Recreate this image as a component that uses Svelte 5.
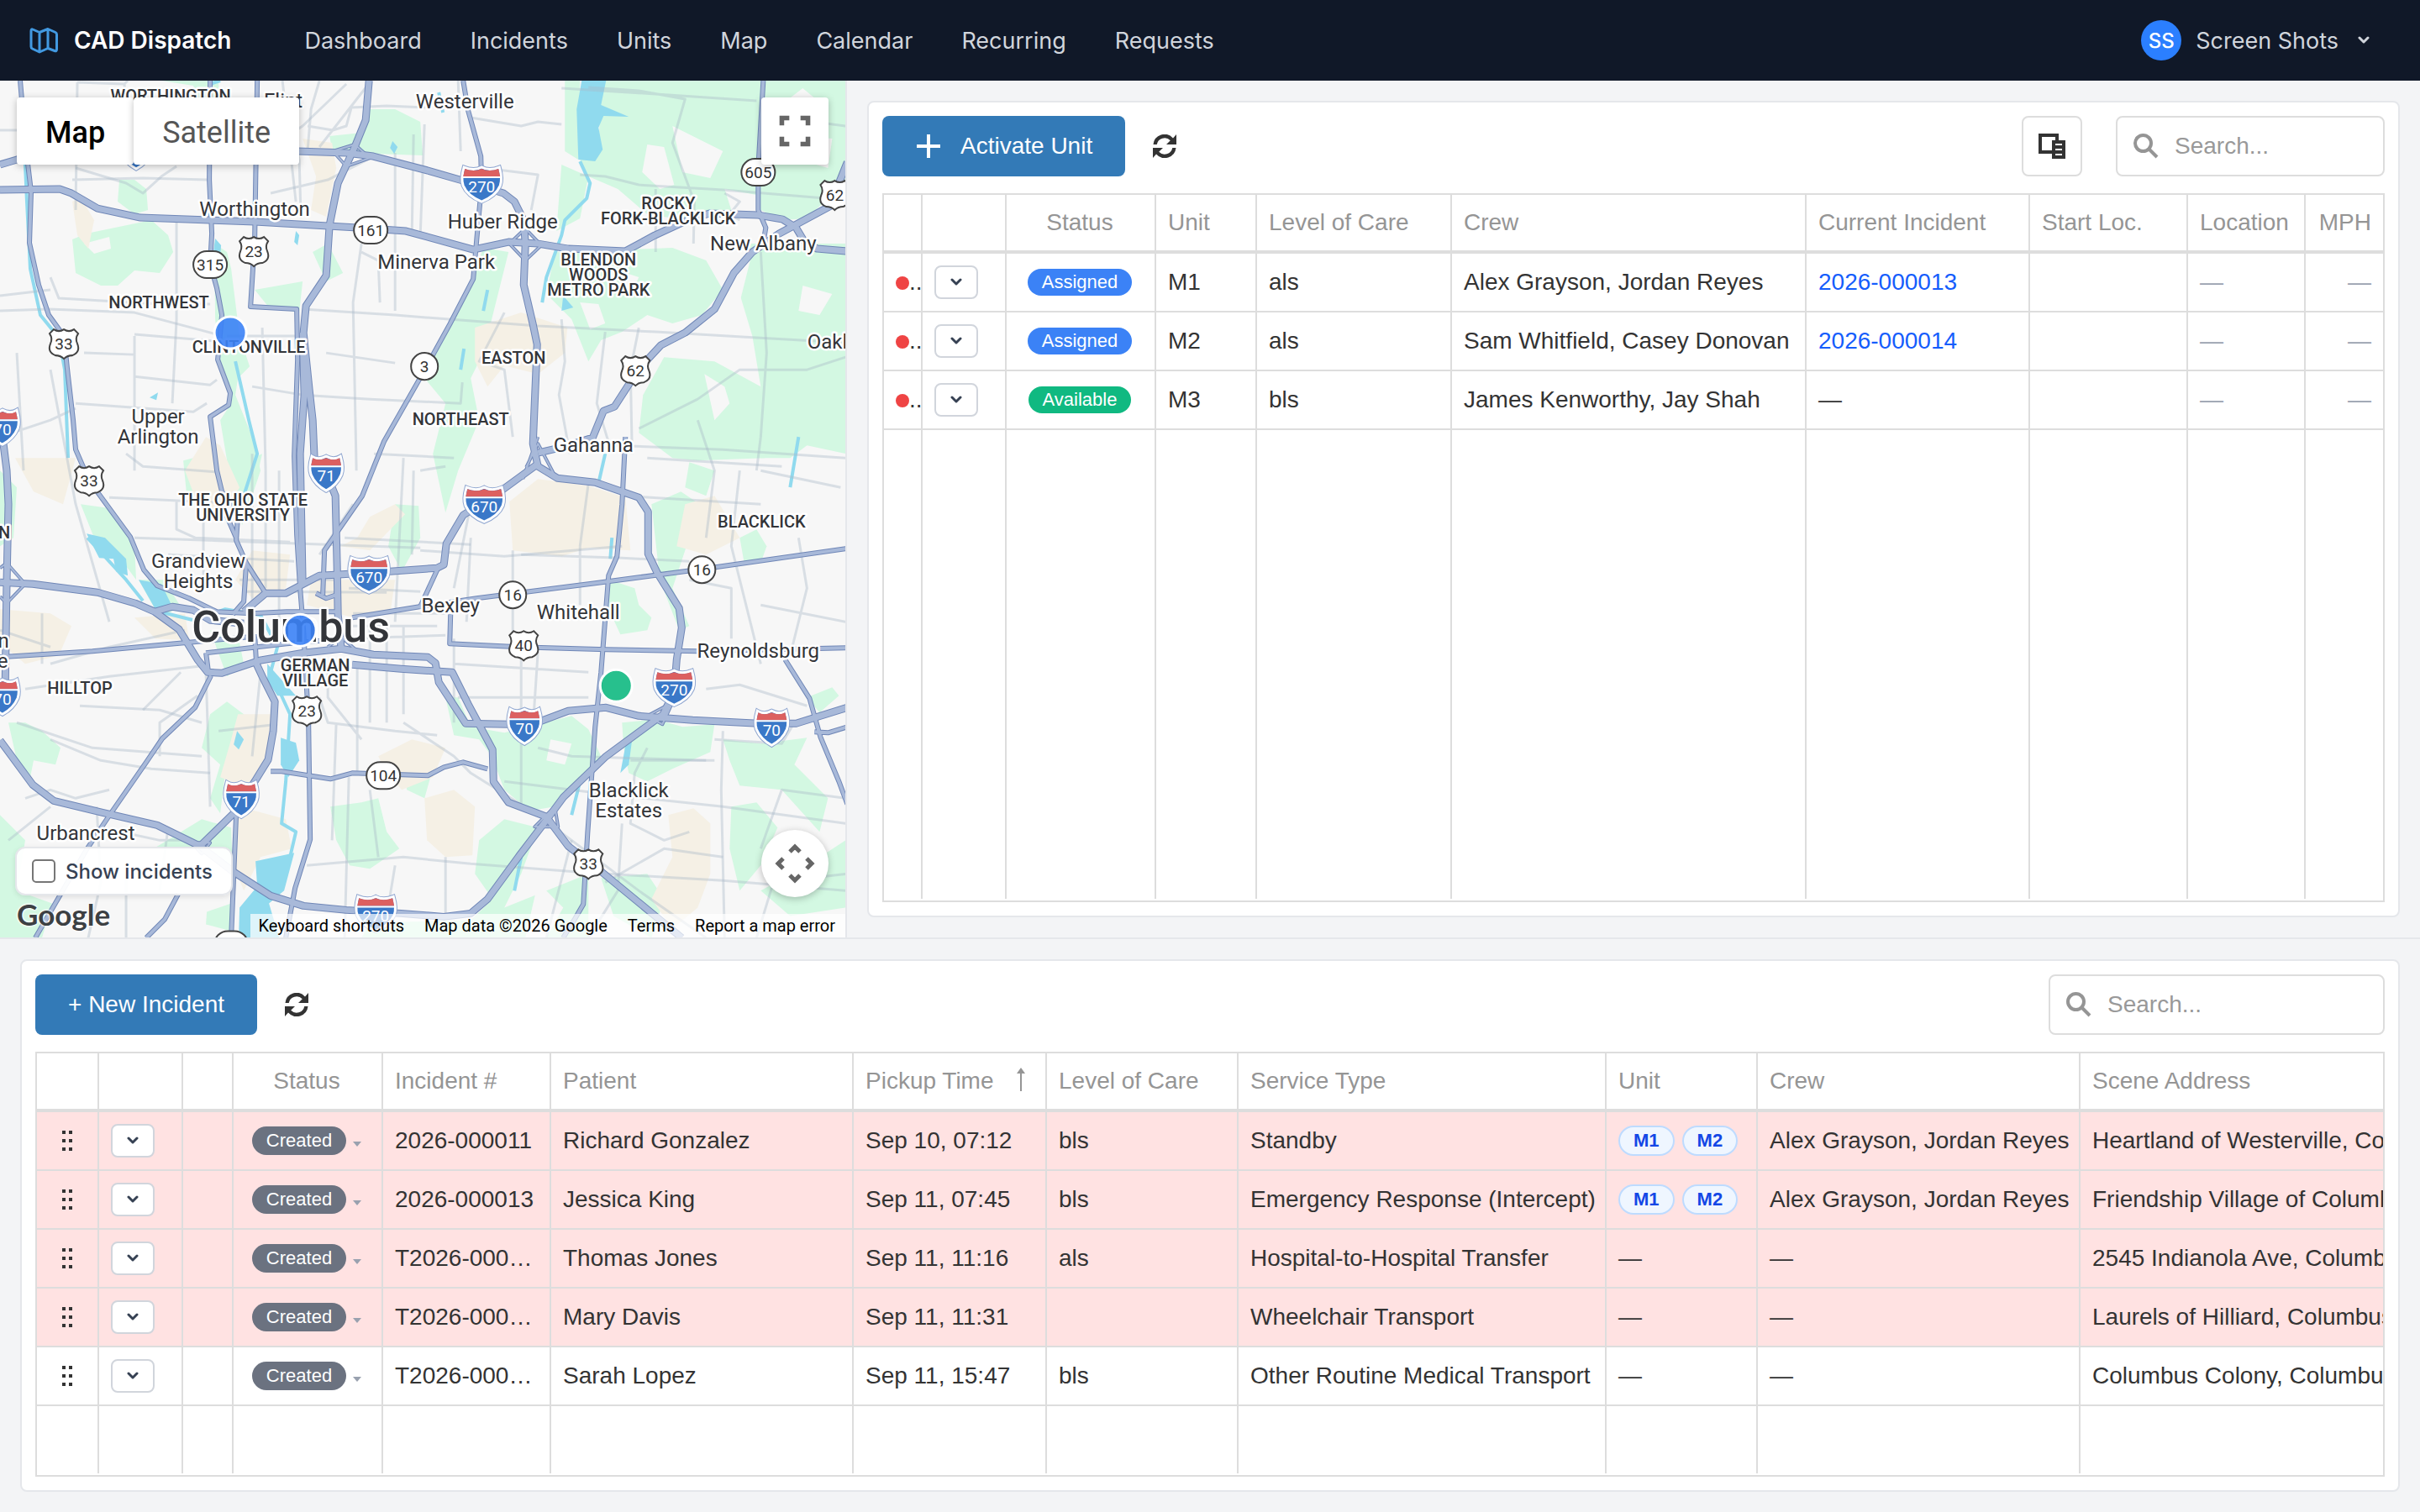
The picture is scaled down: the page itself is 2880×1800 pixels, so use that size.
<script>
  const navLinks = ['Dashboard', 'Incidents', 'Units', 'Map', 'Calendar', 'Recurring', 'Requests'];

  let unitSearch = $state('');
  let incidentSearch = $state('');
  let showIncidents = $state(false);
  let mapType = $state('Map');

  const units = [
    { name: 'M1', status: 'Assigned', care: 'als', crew: 'Alex Grayson, Jordan Reyes', incident: '2026-000013' },
    { name: 'M2', status: 'Assigned', care: 'als', crew: 'Sam Whitfield, Casey Donovan', incident: '2026-000014' },
    { name: 'M3', status: 'Available', care: 'bls', crew: 'James Kenworthy, Jay Shah', incident: null },
  ];

  const incidents = [
    { number: '2026-000011', patient: 'Richard Gonzalez', pickup: 'Sep 10, 07:12', care: 'bls', service: 'Standby', units: ['M1', 'M2'], crew: 'Alex Grayson, Jordan Reyes', address: 'Heartland of Westerville, Columbus', late: true },
    { number: '2026-000013', patient: 'Jessica King', pickup: 'Sep 11, 07:45', care: 'bls', service: 'Emergency Response (Intercept)', units: ['M1', 'M2'], crew: 'Alex Grayson, Jordan Reyes', address: 'Friendship Village of Columbus', late: true },
    { number: 'T2026-000021', patient: 'Thomas Jones', pickup: 'Sep 11, 11:16', care: 'als', service: 'Hospital-to-Hospital Transfer', units: [], crew: '—', address: '2545 Indianola Ave, Columbus', late: true },
    { number: 'T2026-000022', patient: 'Mary Davis', pickup: 'Sep 11, 11:31', care: '', service: 'Wheelchair Transport', units: [], crew: '—', address: 'Laurels of Hilliard, Columbus', late: true },
    { number: 'T2026-000023', patient: 'Sarah Lopez', pickup: 'Sep 11, 15:47', care: 'bls', service: 'Other Routine Medical Transport', units: [], crew: '—', address: 'Columbus Colony, Columbus', late: false },
  ];

  // Map geometry, all in the same coordinate space as the svg viewBox
  const parks = [
    'M716 96H1006V215L960 260 930 262 905 250 850 250 815 262 770 255 735 225 700 210 690 190 712 170Z',
    'M890 290H1006V540L960 530 940 545 905 545 905 460 895 400 880 350Z',
    'M790 425L850 430 905 460 910 545 830 548 800 545 760 515 765 470Z',
    'M660 300L800 295 840 310 860 345 835 375 800 385 770 375 740 395 715 405 700 430 680 380 650 350Z',
    'M575 295L605 300 590 360 575 420 560 450 570 500 545 560 530 610 515 540 530 480 505 450 530 390 555 350Z',
    'M103 278L180 262 200 280 206 300 190 325 160 322 140 340 120 340 90 325 86 285Z',
    'M142 214L160 214 174 225 176 250 160 255 140 240Z',
    'M440 130L470 130 500 145 503 185 444 183 395 178 392 162 430 158Z',
    'M192 96H260L262 150 245 150 230 102Z',
    'M255 290L270 300 275 320 280 360 285 400 297 436 283 450 280 470 300 520 310 560 290 620 283 600 272 560 262 500 275 480 262 430 256 380Z',
    'M372 300L390 290 408 325 388 335Z',
    'M303 345L360 335 356 372 320 366Z',
    'M672 96L690 96 688 190 672 180Z',
    'M668 196L700 210 690 260 662 275Z',
    'M218 548L242 542 244 590 222 588Z',
    'M300 545L312 540 300 590 288 625 282 600Z',
    'M96 600L132 605 160 650 162 690 140 660 112 640Z',
    'M165 690L195 690 215 722 190 735Z',
    'M470 600L498 602 500 640 478 680 462 650Z',
    'M0 560L20 580 16 640 0 650Z',
    'M10 860L30 860 50 870 72 890 66 910 40 905 34 935 20 905Z',
    'M250 750L285 765 290 790 270 805Z',
    'M250 850L270 835 290 850 284 880 268 920 262 968 250 950 262 910 240 890Z',
    'M393 960L430 955 450 950 460 990 475 1010 440 1034 416 1030 400 1000Z',
    'M478 902L520 905 512 925 505 950 484 940Z',
    'M530 830L545 830 560 865 600 872 680 852 700 868 715 900 690 930 660 960 630 965 600 940 585 900 570 880 540 875Z',
    'M740 860L780 856 812 865 850 862 845 895 800 915 770 930 748 920 742 890Z',
    'M860 880L905 885 960 878 945 910 985 950 975 990 930 940 880 935 868 905Z',
    'M600 975L640 985 620 1040 600 1080 700 1040 700 1116 430 1116 440 1098 560 1095 586 1070 565 1040 570 1000Z',
    'M715 1045L770 1040 790 1070 775 1116 730 1090Z',
    'M905 1060L960 1030 1006 1000 1006 1080 940 1090Z',
    'M870 960L900 955 925 985 905 1030 880 1060 868 1010Z',
    'M725 690L755 700 760 720 775 735 770 750 738 755 722 720Z',
    'M775 600L810 585 840 605 820 640 800 700 820 745 808 750 785 690Z',
    'M880 640L900 630 912 650 905 670 885 668Z',
    'M960 830L990 818 998 828 975 848Z',
    'M820 550L850 560 840 590 815 580Z',
    'M0 970L30 1000 20 1060 62 1075 50 1116 0 1116Z',
    'M186 1008L240 975 275 985 277 1040 240 1010Z',
    'M246 1085L275 1075 275 1108 245 1100Z',
  ];

  const clearings = [
    'M770 172L790 175 802 220 785 225 764 205Z',
    'M800 150L860 180 845 212 812 205Z',
    'M862 225L900 232 905 262 870 250Z',
    'M870 300L895 300 880 360 862 372Z',
    'M925 128L955 105 985 130 960 150Z',
    'M930 160L990 165 985 200 950 190Z',
    'M838 445L862 460 868 480 850 500Z',
    'M955 340L990 350 975 375 950 370Z',
    'M735 322L760 330 750 352 738 345Z',
    'M690 360L712 362 720 385 702 392Z',
    'M640 1050L670 1080 650 1116 625 1116Z',
    'M655 880L680 885 672 910 650 905Z',
    'M100 290L130 282 132 296 112 302Z',
  ];

  const districts = [
    'M606 597L640 570 700 578 744 592 750 655 700 652 668 662 610 655Z',
    'M565 390L620 372 675 390 672 420 640 445 600 435 580 460 565 430Z',
    'M0 725L60 730 85 745 70 780 30 790 0 765Z',
    'M505 950L540 940 565 960 562 1018 530 1020 508 1000Z',
    'M795 970L825 962 845 980 845 1040 830 1080 800 1105 775 1070 800 1020Z',
    'M283 850L325 850 318 900 300 940 262 925 275 880Z',
    'M285 960L340 975 347 1010 310 1020 290 1060 278 1030Z',
    'M360 165L395 170 400 200 388 258 370 250 376 210Z',
    'M86 240L96 235 112 262 105 296 92 280Z',
    'M245 520L262 530 285 580 262 620 235 600 220 560Z',
    'M300 655L345 660 340 700 300 712 280 690Z',
    'M405 650L440 655 482 612 470 600 440 615 425 640Z',
    'M370 690L470 690 465 725 420 735 365 720Z',
    'M18 545L90 545 75 600 40 585Z',
    'M815 600L850 590 880 640 840 660 805 650Z',
    'M450 900L490 880 530 890 515 925 478 940 460 920Z',
    'M160 735L220 730 225 762 185 760Z',
  ];

  const water = [
    'M692 96H721L715 125 748 139 718 138 712 152 717 178 708 192 688 190 686 130Z',
    'M103 635L125 640 150 665 152 685 138 680 135 665 118 664Z',
    'M165 690L192 695 205 722 186 727Z',
    'M318 790L352 828 330 828 318 810Z',
    'M334 878L352 884 356 905 343 925 334 910Z',
    'M282 870L290 880 284 892 278 886Z',
    'M304 1025L350 1015 338 1060 320 1075 332 1116 284 1116 285 1080 306 1055Z',
    'M467 168L473 175 469 183 464 176Z',
    'M256 284L263 292 262 305 254 300Z',
    'M670 352L682 366 668 370Z',
    'M178 473L188 467 186 476Z',
    'M352 275L356 280 354 292 350 288Z',
    'M744 888L752 880 748 910 738 920Z',
  ];

  const streams = [
    'M26 110L32 240 36 320 48 375 70 402 77 440 81 545',
    'M690 192L702 218 698 236 672 262 668 280 650 330 645 360',
    'M522 110L527 134',
    'M250 100L262 96M280 430L296 500 306 540 290 590',
    'M186 727L230 738 268 725 310 732 330 770 322 800 345 850 340 930 335 980 352 990 345 1020',
    'M580 345L575 370M552 415L548 440',
    'M104 640L150 690 170 715',
    'M620 1020L612 1060M690 930L680 970',
    'M728 640L726 665M950 520L940 580',
    'M720 540L712 575',
  ];

  const streets = [
    'M92 98L90 250M92 98L148 100 152 96M148 100L150 140M86 214L170 212 246 214M0 155L24 155 40 190',
    'M90 200L150 218 170 230 192 210 210 198',
    'M336 96L352 240M380 96L370 130 366 178M366 150L396 155 412 150 418 128 460 126 506 128M440 98L380 175',
    'M300 190L360 150 412 100M322 230L390 214 445 186M345 140L356 190 358 260',
    'M60 330L70 355 190 362 250 362M0 352L60 345M0 370L58 368 160 372 258 398',
    'M160 400V560M160 398L258 406M100 420L160 422M160 448L250 458 258 452',
    'M210 260V380L205 480M270 400L360 400M312 390L316 560M300 460L360 470 440 475 548 480 550 455',
    'M360 368L470 375 640 388 780 395 900 402 1006 408',
    'M470 182V370M492 160L490 280M430 290L420 360 424 560M388 420L470 432M430 300L450 310 452 360',
    'M545 96L548 180M505 148L500 280M560 140L620 150 640 145 668 148M576 200L640 208 632 250',
    'M668 105L780 112 900 120M700 104L760 108 815 118 800 170 826 240 825 290M690 208L720 210 760 220 860 226 1006 238',
    'M862 230L880 240 868 255 880 262M780 225V300M1006 150L930 140',
    'M600 372L570 430 600 440 610 520M668 380L672 430 665 470 678 540M760 390L750 440 752 540',
    'M500 560L530 555M445 540L540 545M760 510L830 475 880 440 960 440 1006 425M905 300L912 420 905 520 900 560',
    'M720 395L710 480 725 530 860 535 1006 545M770 545L930 555M740 590L905 600M1000 580L905 560',
    'M90 480L230 490 246 480M0 520L60 500 90 486M20 420L28 560M60 440L90 600 130 740',
    'M150 540L170 555 260 562M130 592L300 600M210 595V630L232 640 345 645M160 640L500 652M200 660L350 668',
    'M300 540V720M316 560V700M332 560V740M242 600V700M480 545L470 740M492 560L490 660M500 655L600 662 740 650',
    'M285 690L400 690M290 704L460 705M420 600L380 660M410 640L560 648M415 700L500 704',
    'M420 730H530M420 745H520M410 760L530 756M440 745V860M460 745V860M480 745V850M425 790V920M390 800V830L430 880',
    'M560 600L540 700M610 655V760M690 650V720M700 575L690 650M620 660L740 664 820 668',
    'M60 790L130 770 220 750M30 820L130 805 245 792M95 840L190 845 240 860M50 730V790M0 750L60 770M60 880L120 905 180 915 250 920',
    'M245 800L250 960M260 870L330 862M170 845L215 800M190 900L190 860 235 828M20 860L110 890 240 900',
    'M310 800L300 900M380 830L390 860 470 870 520 875M400 860L395 1000M415 925L410 1116M480 860L540 900 560 920 640 970 760 1060 840 1116',
    'M365 1030L480 1020 560 1028 690 1038 860 1048 1006 1060M600 930L720 945 860 960 1006 980M640 890L680 900 840 905',
    'M540 790L700 800M540 760V860M620 775V960M560 640L555 740M640 775L635 850M545 830L700 830',
    'M830 500L850 560 840 640M820 690L870 700 870 760M880 560L870 650 905 790M840 820L880 815 960 840M905 720L1006 740M950 640L960 700 940 780',
    'M860 870L858 940 862 1116M770 890L755 920 750 980 790 1000 820 990M850 880L930 885 945 860M750 905L850 905',
    'M905 1010L930 940 1006 950M720 1050L790 1010 860 1020M900 1116L920 1050 1006 1040M30 950L60 940 90 950 130 940M10 1000L60 960',
    'M120 985L190 1000 230 1000M115 960L120 1050 105 1116M150 1040V1116M200 985L190 1060',
    'M470 1030L460 1090M530 1020V1090M440 940L450 1020M680 1000L650 1116M740 980L735 1060 700 1116',
  ];

  const highways = [
    'M24 96L31 178 37 228 35 289 46 339 58 375 76 400 80 439 87 500 90 535 106 572 155 639 171 678 187 697 225 712 258 728 300 730 341 728 400 728',
    'M250 96L249 214 252 278 250 314 258 343 264 375 259 428 274 468 272 482 250 496 258 560 264 585 283 612 281 643 293 670 290 716 277 731',
    'M306 96L303 286 298 365 353 368 354 428 350 543 353 636 357 700 361 750 367 858 369 999 351 1057 340 1116',
    'M551 96L557 132 572 186 573 219 567 286 563 332 535 386 502 446 457 525 431 590 386 655 384 708',
    'M908 96L902 200 902 250 911 271 908 289',
    'M499 724L522 674M536 731L535 766 618 770 721 773 831 775 1006 771',
    'M0 782L110 775 219 765 296 758M419 735L499 722 567 712 708 694 837 677 1006 653',
    'M744 520L740 600 734 662 724 685 715 800 708 865 699 992 694 1076 683 1095 670 1116',
    'M322 918L335 918 393 927 419 920 509 923 528 913 551 907 580 915',
    'M251 804L232 842 193 879 174 907 129 972 103 1011 42 1116',
    'M281 969L275 1116M212 1064L196 1094 174 1116M245 777L341 766 410 760M245 777L248 800M303 755L305 790',
    'M934 785L963 831 976 877 998 930 1008 957M969 871L985 872 1008 865',
    'M376 706L388 712 400 708 402 694M293 670L316 706M268 610L281 640',
  ];

  const interstates = [
    'M0 196L20 190 90 178M354 180L412 182 444 186 509 203 554 216 599 230 612 240 623 262 625 290 623 339 634 386 639 410 634 528 640 555 663 569 708 574 760 592 771 609 771 659 782 682 808 724 811 747 805 785 802 823 789 850 721 900 670 949 650 976 618 1018 580 1070 560 1087 528 1091 477 1087 412 1083 361 1078 322 1066 277 1037 238 1007 187 982 122 967 64 953 39 934 0 881',
    'M439 96L435 143 422 175 402 218 392 268 388 328 364 364 361 396 368 464 372 500 374 546 388 563 399 590 401 674 402 731 406 772M360 396L362 470 357 540 360 693',
    'M0 226L71 225 85 230 116 248 167 259 303 264 425 271 483 275 563 297 605 288 640 290 676 296 744 299 779 280 818 262 844 254 902 256 931 261 947 271 956 286 972 296 1008 299',
    'M1008 193L998 218 992 243 927 278 895 300 873 325 850 368 815 396 786 411 760 439 731 484 718 489 705 521 670 532 640 539',
    'M640 552L599 582 576 597 551 613 531 647 528 672 520 676 464 680 399 684 380 685 357 697 340 706 316 706 290 728',
    'M0 693L39 695 116 705 161 718 184 728 213 749 235 785 247 800 264 801 309 786 361 777 406 772 444 779 509 782 518 789 522 812 554 861 605 862 644 858 676 846 721 842 760 852 824 857 902 861 947 861 1008 842',
    'M184 728L205 722 230 726 250 738 290 742M419 791L477 796 538 800 557 838 586 892 587 930 605 955 650 972 676 1007 715 1037 811 1116',
    'M305 790L312 805 327 835 325 870 319 904 303 930 277 969 238 1007M3 520L8 560 10 600 8 693 6 830',
  ];

  const ramps = [
    'M396 180L422 172 440 188 412 198ZM420 175L410 200',
    'M606 290L625 272 644 292 625 310Z',
    'M626 556L640 528 660 566M640 520L622 570',
    'M8 670L30 695 8 718 0 710M0 676L8 670',
    'M770 852L800 836 788 862Z',
    'M636 984L660 960 664 984Z',
    'M228 1003L250 1003 240 1016Z',
    'M390 770L406 758 424 774',
  ];

  const townLabels = [
    [337, 128, 'Flint'], [553, 129, 'Westerville'], [303, 257, 'Worthington'], [598, 272, 'Huber Ridge'],
    [519, 320, 'Minerva Park'], [908, 298, 'New Albany'], [1004, 415, 'Oakland'], [188, 504, 'Upper'],
    [188, 528, 'Arlington'], [706, 538, 'Gahanna'], [236, 676, 'Grandview'], [236, 700, 'Heights'],
    [536, 729, 'Bexley'], [688, 737, 'Whitehall'], [902, 783, 'Reynoldsburg'], [748, 949, 'Blacklick'],
    [748, 973, 'Estates'], [102, 1000, 'Urbancrest'], [4, 771, 'n'], [3, 795, 'e'],
  ];

  const areaLabels = [
    [203, 121, 'WORTHINGTON'], [795, 249, 'ROCKY'], [795, 267, 'FORK-BLACKLICK'], [712, 316, 'BLENDON'],
    [712, 334, 'WOODS'], [712, 352, 'METRO PARK'], [189, 367, 'NORTHWEST'], [296, 420, 'CLINTONVILLE'],
    [611, 433, 'EASTON'], [548, 506, 'NORTHEAST'], [289, 602, 'THE OHIO STATE'], [289, 620, 'UNIVERSITY'],
    [906, 628, 'BLACKLICK'], [375, 799, 'GERMAN'], [375, 817, 'VILLAGE'], [95, 826, 'HILLTOP'], [5, 641, 'N'],
  ];

  const interstateShields = [
    [162, 180, '71'], [573, 219, '270'], [388, 563, '71'], [576, 600, '670'], [439, 684, '670'], [802, 818, '270'],
    [624, 864, '70'], [918, 866, '70'], [287, 951, '71'], [447, 1087, '270'], [3, 508, '70'], [3, 829, '70'],
  ];

  const stateShields = [
    [902, 205, '605'], [441, 274, '161'], [250, 315, '315'], [505, 436, '3'],
    [610, 708, '16'], [835, 678, '16'], [456, 923, '104'], [275, 1124, ''],
  ];

  const usShields = [
    [993, 232, '62'], [302, 299, '23'], [76, 409, '33'], [756, 441, '62'],
    [106, 572, '33'], [623, 768, '40'], [365, 846, '23'], [700, 1028, '33'],
  ];

  const unitMarkers = [
    { x: 274, y: 396, status: 'assigned' },
    { x: 357, y: 750, status: 'assigned' },
    { x: 733, y: 816, status: 'available' },
  ];
</script>

{#snippet chevron()}
  <svg class="chevron" viewBox="0 0 14 10" aria-hidden="true"><path d="M2 2l5 5 5-5" /></svg>
{/snippet}

{#snippet refreshIcon()}
  <svg class="refresh-icon" viewBox="0 0 28 28" aria-hidden="true">
    <path d="M.5 12A13.5 13.5 0 0 1 24 4.400L28 0V12H16L20.800 7.300A9.500 9.500 0 0 0 4.700 12Z" />
    <path d="M27.500 16A13.500 13.500 0 0 1 4 23.600L0 28V16H12L7.200 20.700A9.500 9.500 0 0 0 23.300 16Z" />
  </svg>
{/snippet}

{#snippet searchIcon()}
  <svg class="search-icon" viewBox="0 0 30 30" aria-hidden="true">
    <circle cx="11.500" cy="11.500" r="9.500" /><path d="M18 18l10 10" />
  </svg>
{/snippet}

<div class="app">
  <header class="navbar">
    <a class="brand" href="#home">
      <svg class="brand-icon" viewBox="0 0 36 32" aria-hidden="true">
        <path d="M5 3L13 6.500 23 2.500 32 6.500Q33.500 7.200 33.500 9V26.500Q33.500 29.500 31 28.500L23 25.500 13 30 4.500 26Q3 25.300 3 23.500V5Q3 2 5 3M13 6.500V30M23 2.500V25.500" />
      </svg>
      <span>CAD Dispatch</span>
    </a>
    <nav>
      {#each navLinks as link}
        <a href="#{link.toLowerCase()}">{link}</a>
      {/each}
    </nav>
    <button type="button" class="user">
      <span class="avatar">SS</span>
      <span>Screen Shots</span>
      {@render chevron()}
    </button>
  </header>

  <main>
    <section class="top">
      <div class="map">
        <svg class="map-canvas" viewBox="0 96 1006 1020" preserveAspectRatio="xMinYMin slice" aria-label="Map of Columbus">
          <rect y="96" width="1006" height="1020" fill="#f7f7f7" />
          {#each parks as d}<path {d} fill="#d3f8e2" />{/each}
          {#each clearings as d}<path {d} fill="#f7f7f7" />{/each}
          {#each districts as d}<path {d} fill="#f5f0e5" />{/each}
          {#each water as d}<path {d} fill="#90daee" />{/each}
          {#each streams as d}<path {d} class="stream" />{/each}
          {#each streets as d}<path {d} class="street" />{/each}
          {#each highways as d}<path {d} class="highway casing" />{/each}
          {#each ramps as d}<path {d} class="ramp casing" />{/each}
          {#each interstates as d}<path {d} class="interstate casing" />{/each}
          {#each ramps as d}<path {d} class="ramp" />{/each}
          {#each highways as d}<path {d} class="highway" />{/each}
          {#each interstates as d}<path {d} class="interstate" />{/each}

          {#each interstateShields as [x, y, label]}
            {@const w = label.length > 2 ? 23 : 19}
            <g transform="translate({x} {y})">
              <path d="M{2 - w} -20Q-9 -15 0 -20 9 -15 {w - 2} -20Q{w + 2} -6 {w - 1} 2 {w - 6} 14 0 21 {6 - w} 14 {1 - w} 2 {-w - 2} -6 {2 - w} -20Z" fill="#3a78c8" stroke="#8fa6d0" stroke-width="5" />
              <path d="M{2 - w} -20Q-9 -15 0 -20 9 -15 {w - 2} -20Q{w + 2} -6 {w - 1} 2 {w - 6} 14 0 21 {6 - w} 14 {1 - w} 2 {-w - 2} -6 {2 - w} -20Z" fill="#3a78c8" stroke="#fff" stroke-width="3" />
              <path d="M{3 - w} -18Q-9 -14 0 -18 9 -14 {w - 3} -18L{w - 1} -9H{1 - w}Z" fill="#dc6060" />
              <path d="M{-w} -8H{w}" stroke="#fff" stroke-width="2" />
              <text y="10" class="shield-text light">{label}</text>
            </g>
          {/each}
          {#each stateShields as [x, y, label]}
            {@const w = label.length === 3 || !label ? 20 : 16}
            <rect x={x - w} y={y - 16} width={w * 2} height="32" rx="16" class="shield" />
            <text {x} y={y + 7} class="shield-text">{label}</text>
          {/each}
          {#each usShields as [x, y, label]}
            <g transform="translate({x} {y})">
              <path d="M-12 -17Q-6 -13 0 -17 6 -13 12 -17L17 -12Q13 -6 16 0 20 10 10 14 4 14 0 18 -4 14 -10 14 -20 10 -16 0 -13 -6 -17 -12Z" class="shield" />
              <text y="7" class="shield-text">{label}</text>
            </g>
          {/each}

          {#each townLabels as [x, y, label]}<text {x} {y} class="town">{label}</text>{/each}
          {#each areaLabels as [x, y, label]}<text {x} {y} class="area">{label}</text>{/each}
          <text x="346" y="764" class="city">Columbus</text>

          {#each unitMarkers as marker}
            <circle cx={marker.x} cy={marker.y} r="19" class="marker {marker.status}" />
          {/each}
        </svg>

        <div class="map-types">
          {#each ['Map', 'Satellite'] as type}
            <button type="button" class:active={mapType === type} onclick={() => mapType = type}>{type}</button>
          {/each}
        </div>
        <button type="button" class="fullscreen" aria-label="Toggle fullscreen view">
          <svg viewBox="0 0 36 36" aria-hidden="true"><path d="M12 4H4v8M24 4h8v8M32 24v8h-8M12 32H4v-8" /></svg>
        </button>
        <button type="button" class="camera" aria-label="Map camera controls">
          <svg viewBox="0 0 48 48" aria-hidden="true">
            <path d="M18 10l6-6 6 6M18 38l6 6 6-6M10 18l-6 6 6 6M38 18l6 6-6 6" />
          </svg>
        </button>
        <label class="show-incidents">
          <input type="checkbox" bind:checked={showIncidents} />
          <span>Show incidents</span>
        </label>
        <span class="google">Google</span>
        <div class="attribution">
          <button type="button">Keyboard shortcuts</button>
          <span>Map data ©2026 Google</span>
          <a href="#terms">Terms</a>
          <a href="#report">Report a map error</a>
        </div>
      </div>

      <div class="pane">
        <div class="card">
          <div class="toolbar">
            <button type="button" class="btn-primary">
              <svg class="plus-icon" viewBox="0 0 32 28" aria-hidden="true"><path d="M16 0v28M2 14h28" /></svg>
              Activate Unit
            </button>
            <button type="button" class="btn-icon" aria-label="Refresh units">{@render refreshIcon()}</button>
            <div class="tools">
              <button type="button" class="btn-columns" aria-label="Choose columns">
                <svg viewBox="0 0 32 30" aria-hidden="true">
                  <path d="M0 0H24V8H32V30H16V24H0ZM4 4V20H16V8H20V4ZM20 12V14H28V12ZM20 18V20H28V18ZM20 24V26H28V24Z" />
                </svg>
              </button>
              <label class="search">
                {@render searchIcon()}
                <input type="text" placeholder="Search..." aria-label="Search units" bind:value={unitSearch} />
              </label>
            </div>
          </div>

          <div class="grid-wrap">
            <table class="units-table">
              <colgroup>
                <col class="w-dot" /><col class="w-menu" /><col class="w-status" /><col class="w-unit" />
                <col class="w-care" /><col /><col class="w-current" /><col class="w-start" />
                <col class="w-location" /><col class="w-mph" />
              </colgroup>
              <thead>
                <tr>
                  <th></th>
                  <th></th>
                  <th class="center">Status</th>
                  <th>Unit</th>
                  <th>Level of Care</th>
                  <th>Crew</th>
                  <th>Current Incident</th>
                  <th>Start Loc.</th>
                  <th>Location</th>
                  <th class="right">MPH</th>
                </tr>
              </thead>
              <tbody>
                {#each units as unit}
                  <tr>
                    <td class="dot-cell"><span class="dot"></span>..</td>
                    <td><button type="button" class="row-menu" aria-label="Actions for {unit.name}">{@render chevron()}</button></td>
                    <td class="center"><span class="badge {unit.status.toLowerCase()}">{unit.status}</span></td>
                    <td>{unit.name}</td>
                    <td>{unit.care}</td>
                    <td>{unit.crew}</td>
                    <td>
                      {#if unit.incident}<a href="#incident-{unit.incident}">{unit.incident}</a>{:else}—{/if}
                    </td>
                    <td></td>
                    <td class="muted">—</td>
                    <td class="muted right">—</td>
                  </tr>
                {/each}
                <tr class="filler">{#each { length: 10 } as _}<td></td>{/each}</tr>
              </tbody>
            </table>
          </div>
        </div>
      </div>
    </section>

    <section class="bottom">
      <div class="card">
        <div class="toolbar">
          <button type="button" class="btn-primary">+ New Incident</button>
          <button type="button" class="btn-icon" aria-label="Refresh incidents">{@render refreshIcon()}</button>
          <div class="tools">
            <label class="search wide">
              {@render searchIcon()}
              <input type="text" placeholder="Search..." aria-label="Search incidents" bind:value={incidentSearch} />
            </label>
          </div>
        </div>

        <div class="grid-wrap">
          <table class="incidents-table">
            <colgroup>
              <col class="w-drag" /><col class="w-menu" /><col class="w-flag" /><col class="w-status" />
              <col class="w-number" /><col class="w-patient" /><col class="w-pickup" /><col class="w-level" />
              <col class="w-service" /><col class="w-units" /><col class="w-crew" /><col class="w-address" />
            </colgroup>
            <thead>
              <tr>
                <th></th>
                <th></th>
                <th></th>
                <th class="center">Status</th>
                <th>Incident #</th>
                <th>Patient</th>
                <th>
                  <span class="sorted">
                    Pickup Time
                    <svg viewBox="0 0 10 28" aria-hidden="true"><path d="M4 28V7H0L5 0l5 7H6v21z" /></svg>
                  </span>
                </th>
                <th>Level of Care</th>
                <th>Service Type</th>
                <th>Unit</th>
                <th>Crew</th>
                <th>Scene Address</th>
              </tr>
            </thead>
            <tbody>
              {#each incidents as incident}
                <tr class:late={incident.late}>
                  <td class="drag">
                    <svg viewBox="0 0 12 24" aria-hidden="true">
                      <path d="M0 0h4v4H0zM8 0h4v4H8zM0 10h4v4H0zM8 10h4v4H8zM0 20h4v4H0zM8 20h4v4H8z" />
                    </svg>
                  </td>
                  <td><button type="button" class="row-menu" aria-label="Actions for {incident.number}">{@render chevron()}</button></td>
                  <td></td>
                  <td class="center">
                    <button type="button" class="status-btn">
                      <span class="badge created">Created</span>
                      <svg viewBox="0 0 10 6" aria-hidden="true"><path d="M0 0h10L5 6z" /></svg>
                    </button>
                  </td>
                  <td>{incident.number}</td>
                  <td>{incident.patient}</td>
                  <td>{incident.pickup}</td>
                  <td>{incident.care}</td>
                  <td>{incident.service}</td>
                  <td>
                    {#if incident.units.length}
                      <span class="chips">{#each incident.units as unit}<span class="chip">{unit}</span>{/each}</span>
                    {:else}—{/if}
                  </td>
                  <td>{incident.crew}</td>
                  <td>{incident.address}</td>
                </tr>
              {/each}
              <tr class="filler">{#each { length: 12 } as _}<td></td>{/each}</tr>
            </tbody>
          </table>
        </div>
      </div>
    </section>
  </main>
</div>

<style>
  :global(body) {
    margin: 0;
  }

  .app {
    display: flex;
    flex-direction: column;
    height: 100vh;
    background: #f3f4f6;
    font-family: Inter, sans-serif;
    color: #333;
  }

  .app *, .app {
    box-sizing: border-box;
  }

  button {
    font-family: inherit;
    cursor: pointer;
  }

  .navbar {
    display: flex;
    align-items: center;
    flex-shrink: 0;
    height: 96px;
    padding: 0 60px 0 34px;
    background: #101828;
    font-size: 27px;
  }

  .brand {
    display: flex;
    align-items: center;
    gap: 18px;
    color: #fff;
    font-size: 28px;
    font-weight: 600;
    text-decoration: none;
  }

  .brand-icon {
    width: 36px;
    height: 32px;
    fill: none;
    stroke: #4299e1;
    stroke-width: 3;
    stroke-linejoin: round;
  }

  nav {
    display: flex;
    gap: 58px;
    margin-left: 87px;
  }

  nav a {
    color: #d1d5dc;
    text-decoration: none;
  }

  .user {
    display: flex;
    align-items: center;
    gap: 17px;
    margin-left: auto;
    padding: 0;
    border: none;
    background: none;
    color: #d1d5dc;
    font-size: 27px;
  }

  .user .chevron {
    margin-left: 6px;
  }

  .avatar {
    display: flex;
    align-items: center;
    justify-content: center;
    width: 48px;
    height: 48px;
    border-radius: 50%;
    background: #2b7fff;
    color: #fff;
    font-size: 24px;
    font-weight: 500;
  }

  .chevron {
    width: 14px;
    height: 10px;
    fill: none;
    stroke: currentColor;
    stroke-width: 3;
    stroke-linecap: round;
    stroke-linejoin: round;
  }

  main {
    flex: 1;
    min-height: 0;
    display: grid;
    grid-template-columns: minmax(0, 1fr);
    grid-template-rows: minmax(0, 3fr) minmax(0, 2fr);
  }

  .top {
    display: grid;
    grid-template-columns: minmax(0, 35fr) minmax(0, 65fr);
    grid-template-rows: minmax(0, 1fr);
    border-bottom: 2px solid #e5e7eb;
    min-height: 0;
  }

  .pane, .bottom {
    padding: 24px;
    min-height: 0;
  }

  .map {
    position: relative;
    overflow: hidden;
    border-right: 2px solid #e5e7eb;
    font-family: Roboto, sans-serif;
  }

  .map-canvas {
    display: block;
    width: 100%;
    height: 100%;
  }

  .stream, .street, .highway, .interstate, .ramp {
    fill: none;
    stroke-linejoin: round;
  }

  .stream {
    stroke: #90daee;
    stroke-width: 4;
  }

  .street {
    stroke: #a9b9c8;
    stroke-opacity: 0.4;
    stroke-width: 3;
  }

  .highway {
    stroke: #a8b9d9;
    stroke-width: 4;
  }

  .interstate {
    stroke: #a8b9d9;
    stroke-width: 7;
  }

  .ramp {
    stroke: #a8b9d9;
    stroke-width: 2;
  }

  .highway.casing {
    stroke: #7087b7;
    stroke-width: 6;
  }

  .interstate.casing {
    stroke: #7087b7;
    stroke-width: 9;
  }

  .ramp.casing {
    stroke: #7087b7;
    stroke-width: 4;
  }

  .shield {
    fill: #fff;
    stroke: #444;
    stroke-width: 2;
  }

  .shield-text {
    fill: #333;
    font-size: 19px;
    text-anchor: middle;
  }

  .shield-text.light {
    fill: #fff;
  }

  .town, .area, .city {
    fill: #333539;
    stroke: #fff;
    stroke-width: 5;
    stroke-linejoin: round;
    paint-order: stroke;
    text-anchor: middle;
  }

  .town {
    font-size: 24px;
  }

  .area {
    font-size: 20px;
    font-weight: 500;
  }

  .city {
    font-size: 52px;
    font-weight: 500;
  }

  .marker {
    fill-opacity: 0.9;
    stroke: #fff;
    stroke-width: 3;
  }

  .marker.assigned {
    fill: #3b82f6;
  }

  .marker.available {
    fill: #10b981;
  }

  .map-types {
    position: absolute;
    top: 20px;
    left: 20px;
    display: flex;
    height: 80px;
  }

  .map-types button {
    padding: 4px 34px 0;
    border: none;
    border-radius: 4px;
    background: #fff;
    box-shadow: 0 2px 8px rgba(0, 0, 0, 0.25);
    color: #565656;
    font-size: 36px;
  }

  .map-types button.active {
    color: #000;
    font-weight: 500;
  }

  .fullscreen, .camera {
    position: absolute;
    right: 20px;
    display: flex;
    align-items: center;
    justify-content: center;
    width: 80px;
    height: 80px;
    padding: 0;
    border: none;
    background: #fff;
    box-shadow: 0 2px 8px rgba(0, 0, 0, 0.25);
  }

  .fullscreen {
    top: 20px;
    border-radius: 4px;
  }

  .camera {
    bottom: 48px;
    border-radius: 50%;
  }

  .fullscreen svg, .camera svg {
    fill: none;
    stroke: #666;
  }

  .fullscreen svg {
    width: 40px;
    stroke-width: 5;
  }

  .camera svg {
    width: 48px;
    stroke-width: 5;
  }

  .show-incidents {
    position: absolute;
    left: 18px;
    bottom: 50px;
    display: flex;
    align-items: center;
    gap: 12px;
    height: 58px;
    padding: 0 22px 0 18px;
    border: 2px solid #e5e7eb;
    border-radius: 12px;
    background: rgba(255, 255, 255, 0.95);
    box-shadow: 0 2px 6px rgba(0, 0, 0, 0.1);
    color: #364153;
    font-family: Inter, sans-serif;
    font-size: 24px;
    font-weight: 500;
  }

  .show-incidents input {
    width: 28px;
    height: 28px;
    margin: 0;
    appearance: none;
    border: 2px solid #767676;
    border-radius: 5px;
    background: #fff;
  }

  .show-incidents input:checked {
    background: #2b7fff;
  }

  .google {
    position: absolute;
    left: 20px;
    bottom: 4px;
    color: #3c4043;
    font-family: Lato, sans-serif;
    font-size: 35px;
    font-weight: 700;
    line-height: 48px;
    text-shadow: 0 0 3px #fff, 0 0 3px #fff, 0 0 3px #fff;
  }

  .attribution {
    position: absolute;
    right: 0;
    bottom: 0;
    display: flex;
    align-items: center;
    gap: 24px;
    height: 28px;
    padding: 0 12px 0 10px;
    background: rgba(255, 255, 255, 0.7);
    color: #000;
    font-size: 20px;
    white-space: nowrap;
  }

  .attribution button {
    padding: 0;
    border: none;
    background: none;
    color: #000;
    font-size: 20px;
  }

  .attribution a {
    color: #000;
    text-decoration: none;
  }

  .card {
    display: flex;
    flex-direction: column;
    gap: 20px;
    height: 100%;
    padding: 16px;
    border: 2px solid #e5e7eb;
    border-radius: 8px;
    background: #fff;
    font-family: "Liberation Sans", Arial, sans-serif;
    font-size: 28px;
  }

  .toolbar {
    display: flex;
    align-items: center;
    flex-shrink: 0;
    height: 72px;
  }

  .btn-primary {
    display: flex;
    align-items: center;
    gap: 22px;
    height: 72px;
    padding: 0 39px;
    border: none;
    border-radius: 8px;
    background: #337ab7;
    color: #fff;
    font-size: 28px;
  }

  .plus-icon {
    width: 32px;
    height: 28px;
    stroke: #fff;
    stroke-width: 4;
  }

  .btn-icon {
    display: flex;
    align-items: center;
    justify-content: center;
    width: 72px;
    height: 72px;
    margin-left: 11px;
    padding: 0;
    border: none;
    background: none;
  }

  .refresh-icon {
    width: 28px;
    height: 28px;
    fill: #333;
  }

  .tools {
    display: flex;
    gap: 40px;
    margin-left: auto;
  }

  .btn-columns {
    display: flex;
    align-items: center;
    justify-content: center;
    width: 72px;
    height: 72px;
    padding: 0;
    border: 2px solid #ddd;
    border-radius: 8px;
    background: #fff;
  }

  .btn-columns svg {
    width: 32px;
    height: 30px;
    fill: #333;
    fill-rule: evenodd;
  }

  .search {
    display: flex;
    align-items: center;
    gap: 19px;
    width: 320px;
    height: 72px;
    padding: 0 19px;
    border: 2px solid #ddd;
    border-radius: 8px;
    background: #fff;
  }

  .search.wide {
    width: 400px;
  }

  .search input {
    flex: 1;
    min-width: 0;
    padding: 0;
    border: none;
    outline: none;
    background: none;
    color: #333;
    font-family: inherit;
    font-size: 28px;
  }

  .search input::placeholder {
    color: #999;
    opacity: 1;
  }

  .search-icon {
    flex-shrink: 0;
    width: 30px;
    height: 30px;
    fill: none;
    stroke: #959595;
    stroke-width: 4;
  }

  .grid-wrap {
    flex: 1;
    min-height: 0;
    overflow: hidden;
    padding-bottom: 2px;
    border: 2px solid #ddd;
  }

  table {
    width: 100%;
    height: 100%;
    table-layout: fixed;
    border-collapse: separate;
    border-spacing: 0;
  }

  .incidents-table {
    width: 3000px;
  }

  .w-dot { width: 46px; }
  .w-menu { width: 100px; }
  .w-status { width: 178px; }
  .w-unit { width: 120px; }
  .w-care { width: 232px; }
  .w-current { width: 266px; }
  .w-start { width: 188px; }
  .w-location { width: 140px; }
  .w-mph { width: 92px; }
  .w-drag { width: 74px; }
  .w-flag { width: 60px; }
  .w-number { width: 200px; }
  .w-patient { width: 360px; }
  .w-pickup { width: 230px; }
  .w-level { width: 228px; }
  .w-service { width: 438px; }
  .w-units { width: 180px; }
  .w-crew { width: 384px; }

  th, td {
    height: 70px;
    padding: 0 8px 0 14px;
    border-right: 2px solid #ddd;
    border-bottom: 2px solid #ddd;
    line-height: 36px;
    text-align: left;
    vertical-align: middle;
    white-space: nowrap;
    overflow: hidden;
    text-overflow: ellipsis;
  }

  th {
    border-bottom-width: 4px;
    color: #959595;
    font-weight: 400;
    text-overflow: clip;
  }

  th:last-child, td:last-child {
    border-right: none;
  }

  .filler td {
    height: auto;
    border-bottom: none;
  }

  .late td {
    background: #ffe2e2;
  }

  .center {
    padding-right: 16px;
    text-align: center;
  }

  .right {
    padding-right: 14px;
    text-align: right;
  }

  .muted {
    color: #99a1af;
  }

  td a {
    color: #155dfc;
    text-decoration: none;
  }

  .dot-cell {
    padding-right: 0;
    text-overflow: clip;
  }

  .dot {
    display: inline-block;
    width: 16px;
    height: 16px;
    border-radius: 50%;
    background: #ef4444;
  }

  .row-menu {
    display: flex;
    align-items: center;
    justify-content: center;
    width: 52px;
    height: 40px;
    padding: 0;
    border: 2px solid #d1d5dc;
    border-radius: 8px;
    background: #fff;
    color: #364153;
  }

  .badge {
    display: block;
    width: fit-content;
    margin: 0 auto;
    padding: 0 17px;
    border-radius: 17px;
    color: #fff;
    font-size: 22px;
    line-height: 32px;
  }

  .badge.assigned {
    background: #3b82f6;
  }

  .badge.available {
    background: #10b981;
  }

  .badge.created {
    background: #6b7280;
    line-height: 34px;
  }

  .status-btn {
    display: flex;
    align-items: center;
    gap: 8px;
    width: fit-content;
    margin: 0 auto;
    padding: 0;
    border: none;
    background: none;
  }

  .status-btn svg {
    width: 10px;
    height: 6px;
    margin-top: 8px;
    fill: #99a1af;
  }

  .drag {
    padding: 0;
  }

  .drag svg {
    display: block;
    width: 12px;
    height: 24px;
    margin: 0 auto;
    fill: #333;
  }

  .chips {
    display: flex;
    gap: 9px;
  }

  .chip {
    padding: 0 16px;
    border: 2px solid #bedbff;
    border-radius: 18px;
    background: #eff6ff;
    color: #1447e6;
    font-size: 22px;
    font-weight: 700;
    line-height: 32px;
  }

  .sorted {
    display: flex;
    align-items: center;
    justify-content: space-between;
    padding-right: 16px;
  }

  .sorted svg {
    width: 10px;
    height: 28px;
    margin-bottom: 4px;
    fill: #959595;
  }
</style>
